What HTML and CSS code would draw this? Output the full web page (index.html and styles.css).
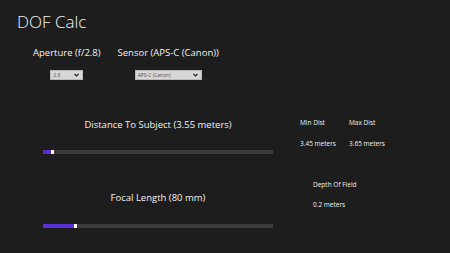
FILE: index.html
```html
<!DOCTYPE html>
<html lang="en">
<head>
    <meta charset="UTF-8">
    <title>DOF Calc</title>
    <link rel="stylesheet" href="styles.css">
</head>
<body>
    <h1 class="title">DOF Calc</h1>

    <div class="settings">
        <div class="setting aperture">
            <div class="label">Aperture (f/2.8)</div>
            <div class="picker small">
                <span>2.8</span>
                <svg width="5" height="4" viewBox="0 0 5 4"><path d="M0.5 1 L2.5 3 L4.5 1" fill="none" stroke="#222" stroke-width="1.2"/></svg>
            </div>
        </div>
        <div class="setting sensor">
            <div class="label">Sensor (APS-C (Canon))</div>
            <div class="picker wide">
                <span>APS-C (Canon)</span>
                <svg width="5" height="4" viewBox="0 0 5 4"><path d="M0.5 1 L2.5 3 L4.5 1" fill="none" stroke="#222" stroke-width="1.2"/></svg>
            </div>
        </div>
    </div>

    <div class="main">
        <div class="sliders">
            <div class="slider-block distance">
                <div class="label">Distance To Subject (3.55 meters)</div>
                <div class="track">
                    <div class="fill" style="width: 8px"></div>
                    <div class="thumb"></div>
                </div>
            </div>
            <div class="slider-block focal">
                <div class="label">Focal Length (80 mm)</div>
                <div class="track">
                    <div class="fill" style="width: 31px"></div>
                    <div class="thumb"></div>
                </div>
            </div>
        </div>

        <div class="results">
            <div class="result-row dist">
                <div class="result">
                    <div class="name">Min Dist</div>
                    <div class="value">3.45 meters</div>
                </div>
                <div class="result">
                    <div class="name">Max Dist</div>
                    <div class="value">3.65 meters</div>
                </div>
            </div>
            <div class="result-row dof">
                <div class="result">
                    <div class="name">Depth Of Field</div>
                    <div class="value">0.2 meters</div>
                </div>
            </div>
        </div>
    </div>
</body>
</html>
```

FILE: styles.css
```css
body {
    margin: 0;
    background-color: #1d1d1d;
    color: #f2f2f2;
    font-family: 'Open Sans', sans-serif;
}

.title {
    margin: 0;
    padding: 11px 0 0 17px;
    font-size: 17px;
    font-weight: 300;
    line-height: 22px;
}

.settings {
    display: flex;
    gap: 17px;
    padding: 13px 0 0 33px;
}

.setting {
    display: flex;
    flex-direction: column;
    align-items: center;
}

.setting .label {
    font-size: 9.5px;
    line-height: 14px;
}

.picker {
    display: flex;
    justify-content: space-between;
    align-items: center;
    box-sizing: border-box;
    height: 10px;
    margin-top: 10px;
    padding: 0 3px 0 2px;
    background-color: #d6d6d6;
    border: 1px solid #b8b8b8;
    color: #555;
    font-size: 5px;
}

.picker.small {
    width: 33px;
}

.picker.wide {
    width: 67px;
}

.main {
    display: flex;
    padding: 38px 0 0 43px;
}

.sliders {
    width: 230px;
}

.slider-block .label {
    text-align: center;
    font-size: 9.5px;
    line-height: 14px;
}

.slider-block.focal {
    margin-top: 37px;
}

.track {
    display: flex;
    height: 4px;
    margin-top: 18px;
    background-color: #3b3b3b;
}

.slider-block.focal .track {
    margin-top: 19px;
}

.fill {
    background-color: #5a2fd6;
}

.thumb {
    width: 3px;
    height: 4px;
    background-color: #fff;
}

.results {
    padding-left: 27px;
    font-size: 6.5px;
}

.result-row {
    display: flex;
}

.result {
    width: 49px;
}

.result .name {
    line-height: 8px;
    margin-top: 1px;
}

.result .value {
    line-height: 8px;
    margin-top: 13px;
}

.result-row.dof {
    padding-left: 13px;
}

.result-row.dof .name {
    margin-top: 33px;
}

.result-row.dof .value {
    margin-top: 12px;
}
```
